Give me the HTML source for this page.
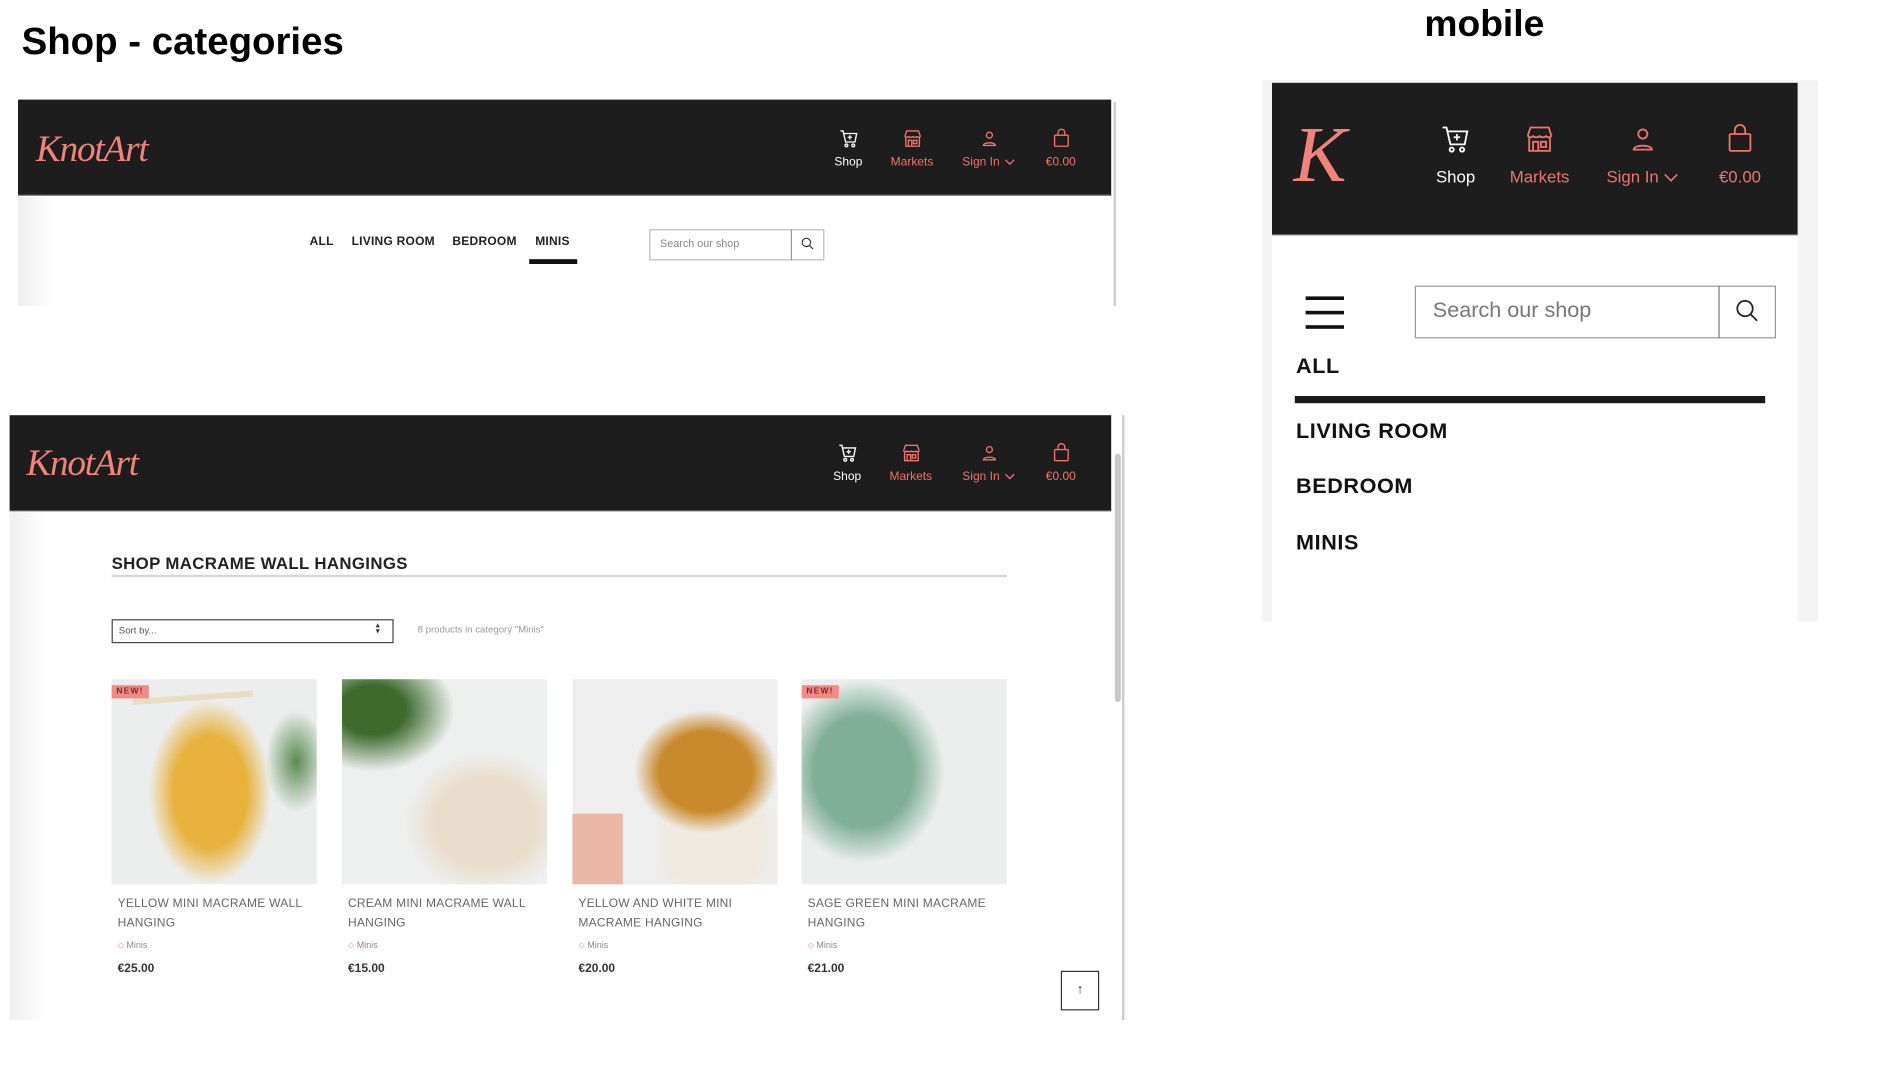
<!DOCTYPE html>
<html><head><meta charset="utf-8"><style>
*{margin:0;padding:0;box-sizing:border-box}
html,body{width:1884px;height:1070px;overflow:hidden;background:#fff;font-family:"Liberation Sans","DejaVu Sans",sans-serif}
#w{position:absolute;left:0;top:0;width:1570px;height:892px;transform:scale(1.2);transform-origin:0 0}
.a{position:absolute}
.hdr{background:#1d1d1d;position:absolute}
.logo{position:absolute;color:#f2837b;font-family:"Liberation Serif",serif;font-style:italic;font-size:31px;letter-spacing:-1px}
.ni{position:absolute;text-align:center;font-size:10px;color:#f0736c;white-space:nowrap;line-height:12px}
.ni svg.ic{display:block;margin:0 auto 6px}
.ni svg.ch{display:inline-block;vertical-align:middle;margin-left:4px}
.m .ni svg.ic{margin-bottom:10px}
.cat{position:absolute;font-size:10px;font-weight:bold;color:#222;letter-spacing:.2px}
.pt{position:absolute;font-size:10px;color:#666;line-height:16px;letter-spacing:.2px}
.tag{position:absolute;font-size:7.5px;color:#888}
.pr{position:absolute;font-size:10px;font-weight:bold;color:#333}
.img{position:absolute;width:171px;height:171px;overflow:hidden}
.new{position:absolute;left:0;top:5px;background:#f48a85;color:#7a2a26;font-size:7px;font-weight:bold;padding:2px 4px;letter-spacing:1px}
.mc{position:absolute;font-size:18px;font-weight:bold;color:#111;letter-spacing:.5px}
</style></head><body><div id="w">

<div class="a" style="left:18px;top:16px;font-size:32px;font-weight:bold;color:#000">Shop - categories</div>
<div class="a" style="left:1187px;top:2px;font-size:31px;font-weight:bold;color:#000">mobile</div>

<!-- Header 1 -->
<div class="hdr" style="left:15px;top:83px;width:911px;height:80px;border-bottom:1px solid #555"></div>
<div class="logo" style="left:30px;top:106px">KnotArt</div>
<div class="a" style="left:15px;top:164px;width:30px;height:91px;background:linear-gradient(90deg,#eee,#fff)"></div>
<div class="a" style="left:928px;top:85px;width:2px;height:170px;background:#ccc"></div>

<div class="ni" style="left:692px;top:107px;width:30px;color:#fff">
<svg class="ic" width="17" height="17" viewBox="0 0 24 24" fill="none" stroke="#fff" stroke-width="1.6"><path d="M2 3h3l3 13h11l2-10H6"/><circle cx="9" cy="20" r="1.6"/><circle cx="17" cy="20" r="1.6"/><path d="M13 8v5M10.5 10.5h5"/></svg>Shop</div>
<div class="ni" style="left:738px;top:107px;width:44px">
<svg class="ic" width="17" height="17" viewBox="0 0 24 24" fill="none" stroke="#f0736c" stroke-width="1.6"><path d="M3 9l2-6h14l2 6M3 9c0 2 4 2 4 0c0 2 5 2 5 0c0 2 5 2 5 0c0 2 4 2 4 0M4 10v11h16V10M7 21v-7h4v7M13 14h4v4h-4z"/></svg>Markets</div>
<div class="ni" style="left:796px;top:107px;width:56px">
<svg class="ic" width="17" height="17" viewBox="0 0 24 24" fill="none" stroke="#f0736c" stroke-width="1.6"><circle cx="12" cy="8" r="3.5"/><path d="M5 20c0-4 14-4 14 0z"/></svg>Sign In<svg class="ch" width="9" height="6" viewBox="0 0 10 6" fill="none" stroke="#f0736c" stroke-width="1.2"><path d="M1 1l4 4 4-4"/></svg></div>
<div class="ni" style="left:866px;top:107px;width:36px">
<svg class="ic" width="17" height="17" viewBox="0 0 24 24" fill="none" stroke="#f0736c" stroke-width="1.6"><rect x="4" y="8" width="16" height="13" rx="1"/><path d="M8 8V5a4 4 0 0 1 8 0v3"/></svg>€0.00</div>

<div class="cat" style="left:258px;top:196px">ALL</div>
<div class="cat" style="left:293px;top:196px">LIVING ROOM</div>
<div class="cat" style="left:377px;top:196px">BEDROOM</div>
<div class="cat" style="left:446px;top:196px">MINIS</div>
<div class="a" style="left:441px;top:216px;width:40px;height:4px;background:#111"></div>
<div class="a" style="left:541px;top:191px;width:146px;height:26px;border:1px solid #bbb;background:#fff"></div>
<div class="a" style="left:659px;top:191px;width:1px;height:26px;background:#999"></div>
<div class="a" style="left:550px;top:198px;font-size:9px;color:#888">Search our shop</div>
<svg class="a" style="left:667px;top:197px" width="12" height="12" viewBox="0 0 24 24" fill="none" stroke="#333" stroke-width="2"><circle cx="10" cy="10" r="7"/><path d="M15 15l6 6"/></svg>

<!-- Header 2 -->
<div class="hdr" style="left:8px;top:346px;width:918px;height:80px;border-bottom:1px solid #555"></div>
<div class="logo" style="left:22px;top:368px">KnotArt</div>
<div class="a" style="left:8px;top:427px;width:30px;height:423px;background:linear-gradient(90deg,#eee,#fff)"></div>
<div class="a" style="left:935px;top:346px;width:2px;height:504px;background:#ccc"></div>
<div class="a" style="left:929px;top:378px;width:5px;height:207px;background:#c8c8c8;border-radius:3px"></div>

<div class="ni" style="left:691px;top:369px;width:30px;color:#fff">
<svg class="ic" width="17" height="17" viewBox="0 0 24 24" fill="none" stroke="#fff" stroke-width="1.6"><path d="M2 3h3l3 13h11l2-10H6"/><circle cx="9" cy="20" r="1.6"/><circle cx="17" cy="20" r="1.6"/><path d="M13 8v5M10.5 10.5h5"/></svg>Shop</div>
<div class="ni" style="left:737px;top:369px;width:44px">
<svg class="ic" width="17" height="17" viewBox="0 0 24 24" fill="none" stroke="#f0736c" stroke-width="1.6"><path d="M3 9l2-6h14l2 6M3 9c0 2 4 2 4 0c0 2 5 2 5 0c0 2 5 2 5 0c0 2 4 2 4 0M4 10v11h16V10M7 21v-7h4v7M13 14h4v4h-4z"/></svg>Markets</div>
<div class="ni" style="left:796px;top:369px;width:56px">
<svg class="ic" width="17" height="17" viewBox="0 0 24 24" fill="none" stroke="#f0736c" stroke-width="1.6"><circle cx="12" cy="8" r="3.5"/><path d="M5 20c0-4 14-4 14 0z"/></svg>Sign In<svg class="ch" width="9" height="6" viewBox="0 0 10 6" fill="none" stroke="#f0736c" stroke-width="1.2"><path d="M1 1l4 4 4-4"/></svg></div>
<div class="ni" style="left:866px;top:369px;width:36px">
<svg class="ic" width="17" height="17" viewBox="0 0 24 24" fill="none" stroke="#f0736c" stroke-width="1.6"><rect x="4" y="8" width="16" height="13" rx="1"/><path d="M8 8V5a4 4 0 0 1 8 0v3"/></svg>€0.00</div>

<div class="a" style="left:93px;top:461px;font-size:14px;font-weight:bold;color:#222;letter-spacing:.3px">SHOP MACRAME WALL HANGINGS</div>
<div class="a" style="left:93px;top:479px;width:746px;height:2px;background:#d6d6d6"></div>
<div class="a" style="left:93px;top:516px;width:235px;height:20px;border:1.5px solid #444;background:#fff"></div>
<div class="a" style="left:99px;top:521px;font-size:8px;color:#555">Sort by...</div>
<div class="a" style="left:313px;top:519px;font-size:7px;color:#333;line-height:5px">▴<br>▾</div>
<div class="a" style="left:348px;top:520px;font-size:8px;color:#999">8 products in category "Minis"</div>

<div class="img" style="left:93px;top:566px;background:radial-gradient(ellipse 30% 45% at 48% 55%,#e7b23c 60%,rgba(231,178,60,0) 100%),radial-gradient(ellipse 15% 25% at 90% 40%,#5b8a52,rgba(0,0,0,0)),#eceeee"><div class="a" style="left:18px;top:13px;width:100px;height:5px;background:#e8dcc4;transform:rotate(-4deg)"></div><div class="new">NEW!</div></div>
<div class="img" style="left:285px;top:566px;background:radial-gradient(ellipse 40% 30% at 15% 15%,#3e6a2c 40%,rgba(62,106,44,0) 100%),radial-gradient(ellipse 40% 35% at 70% 70%,#e8dccb 60%,rgba(0,0,0,0)),#eef0f0"></div>
<div class="img" style="left:477px;top:566px;background:radial-gradient(ellipse 35% 30% at 65% 45%,#c88a2c 65%,rgba(0,0,0,0)),radial-gradient(ellipse 30% 40% at 70% 80%,#efeae0 70%,rgba(0,0,0,0)),#eeeeee"><div class="a" style="left:0;top:112px;width:42px;height:59px;background:#e9b7a4"></div></div>
<div class="img" style="left:668px;top:566px;background:radial-gradient(ellipse 40% 45% at 30% 45%,#7faf98 60%,rgba(0,0,0,0)),#eceeee"><div class="new">NEW!</div></div>

<div class="pt" style="left:98px;top:746px">YELLOW MINI MACRAME WALL<br>HANGING</div>
<div class="pt" style="left:290px;top:746px">CREAM MINI MACRAME WALL<br>HANGING</div>
<div class="pt" style="left:482px;top:746px">YELLOW AND WHITE MINI<br>MACRAME HANGING</div>
<div class="pt" style="left:673px;top:746px">SAGE GREEN MINI MACRAME<br>HANGING</div>
<div class="tag" style="left:98px;top:783px"><span style="color:#f48a85">⬦</span> Minis</div>
<div class="tag" style="left:290px;top:783px"><span style="color:#f48a85">⬦</span> Minis</div>
<div class="tag" style="left:482px;top:783px"><span style="color:#f48a85">⬦</span> Minis</div>
<div class="tag" style="left:673px;top:783px"><span style="color:#f48a85">⬦</span> Minis</div>
<div class="pr" style="left:98px;top:802px">€25.00</div>
<div class="pr" style="left:290px;top:802px">€15.00</div>
<div class="pr" style="left:482px;top:802px">€20.00</div>
<div class="pr" style="left:673px;top:802px">€21.00</div>
<div class="a" style="left:884px;top:809px;width:32px;height:33px;border:1px solid #333;background:#fff;text-align:center;font-size:11px;line-height:31px;color:#333">↑</div>

<!-- mobile -->
<div class="m">
<div class="a" style="left:1052px;top:67px;width:463px;height:451px;background:#f3f3f3"></div>
<div class="a" style="left:1060px;top:69px;width:438px;height:449px;background:#fff"></div>
<div class="hdr" style="left:1060px;top:69px;width:438px;height:127px;border-bottom:1px solid #666"></div>
<div class="a" style="left:1078px;top:92px;font-family:'Liberation Serif',serif;font-style:italic;font-size:66px;color:#f2837b">K</div>
<div class="ni" style="left:1193px;top:103px;width:40px;color:#fff;font-size:14px;line-height:16px">
<svg class="ic" width="26" height="26" viewBox="0 0 24 24" fill="none" stroke="#fff" stroke-width="1.4"><path d="M2 3h3l3 13h11l2-10H6"/><circle cx="9" cy="20" r="1.6"/><circle cx="17" cy="20" r="1.6"/><path d="M13 8v5M10.5 10.5h5"/></svg>Shop</div>
<div class="ni" style="left:1253px;top:103px;width:60px;font-size:14px;line-height:16px">
<svg class="ic" width="26" height="26" viewBox="0 0 24 24" fill="none" stroke="#f0736c" stroke-width="1.4"><path d="M3 9l2-6h14l2 6M3 9c0 2 4 2 4 0c0 2 5 2 5 0c0 2 5 2 5 0c0 2 4 2 4 0M4 10v11h16V10M7 21v-7h4v7M13 14h4v4h-4z"/></svg>Markets</div>
<div class="ni" style="left:1329px;top:103px;width:80px;font-size:14px;line-height:16px">
<svg class="ic" width="26" height="26" viewBox="0 0 24 24" fill="none" stroke="#f0736c" stroke-width="1.4"><circle cx="12" cy="8" r="3.5"/><path d="M5 20c0-4 14-4 14 0z"/></svg>Sign In<svg class="ch" width="13" height="8" viewBox="0 0 10 6" fill="none" stroke="#f0736c" stroke-width="1"><path d="M1 1l4 4 4-4"/></svg></div>
<div class="ni" style="left:1426px;top:103px;width:48px;font-size:14px;line-height:16px">
<svg class="ic" width="26" height="26" viewBox="0 0 24 24" fill="none" stroke="#f0736c" stroke-width="1.4"><rect x="4" y="8" width="16" height="13" rx="1"/><path d="M8 8V5a4 4 0 0 1 8 0v3"/></svg>€0.00</div>
</div>

<div class="a" style="left:1088px;top:247px;width:32px;height:3px;background:#111"></div>
<div class="a" style="left:1088px;top:259px;width:32px;height:3px;background:#111"></div>
<div class="a" style="left:1088px;top:271px;width:32px;height:3px;background:#111"></div>
<div class="a" style="left:1179px;top:238px;width:301px;height:44px;border:1px solid #999;background:#fff"></div>
<div class="a" style="left:1432px;top:238px;width:1px;height:44px;background:#777"></div>
<div class="a" style="left:1194px;top:248px;font-size:18px;color:#777">Search our shop</div>
<svg class="a" style="left:1445px;top:248px" width="22" height="22" viewBox="0 0 24 24" fill="none" stroke="#222" stroke-width="1.6"><circle cx="10" cy="10" r="7"/><path d="M15 15l6 6"/></svg>
<div class="mc" style="left:1080px;top:295px">ALL</div>
<div class="a" style="left:1079px;top:330px;width:392px;height:6px;background:#1b1b1b"></div>
<div class="mc" style="left:1080px;top:349px">LIVING ROOM</div>
<div class="mc" style="left:1080px;top:395px">BEDROOM</div>
<div class="mc" style="left:1080px;top:442px">MINIS</div>
</div></body></html>
